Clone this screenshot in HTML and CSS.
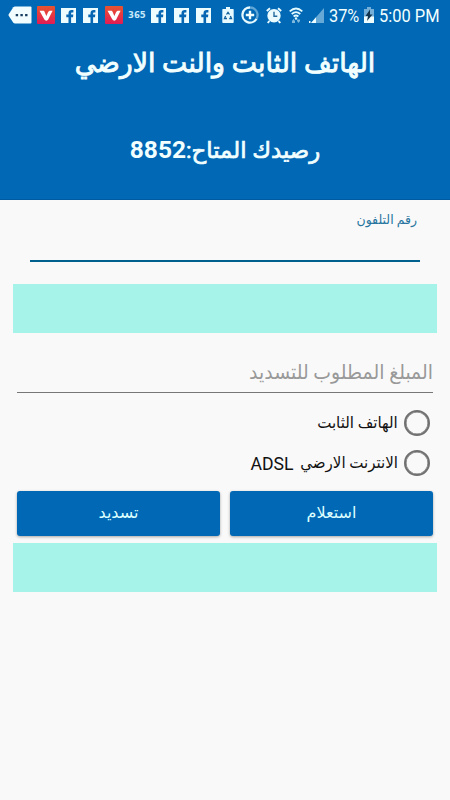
FILE: index.html
```
<!DOCTYPE html>
<html lang="ar" dir="rtl">
  <head>
    <meta charset="UTF-8" />
    <meta name="viewport" content="width=device-width, initial-scale=1.0" />
    <title>الهاتف الثابت والنت الارضي</title>
    <link rel="stylesheet" href="styles.css">
  </head>
  <body>
    <!-- shared icons -->
    <svg class="sprite" width="0" height="0">
      <symbol id="facebook" viewBox="0 0 15 15">
        <rect width="15" height="15" fill="#edfcff" />
        <path d="M7.500 15V9.200H5.300V6.600h2.200V5.200c0-2 1.200-3.200 3.200-3.200h1.700v2.400h-1.200c-.9 0-1.100.4-1.100 1.100v1.100h2.200l-.3 2.600h-1.900V15z" fill="#0767b2" />
      </symbol>
      <symbol id="vid" viewBox="0 0 18 18">
        <defs>
          <linearGradient id="red" x1="0" y1="0" x2="0" y2="1">
            <stop offset="0" stop-color="#e8542f" />
            <stop offset="1" stop-color="#e01c55" />
          </linearGradient>
        </defs>
        <rect width="18" height="18" rx="1" fill="url(#red)" />
        <path d="M2.500 4.700h3.700c.8 0 1 .3 1.300 1l1.900 4.300 1.500-3.500c.6-1.300 1.200-1.800 2.500-1.800h2.200l-4.400 8.900c-.8 1.400-3 1.400-3.800 0z" fill="#fff" />
      </symbol>
    </svg>

    <header class="header">
      <div class="status">
        <svg class="tag" width="24" height="18" viewBox="0 0 24 18">
          <path d="M7 .5h15.500q1 0 1 1v15q0 1-1 1H7q-1 0-1.700-.8L.7 9.800q-.5-.8 0-1.600l4.600-6.900Q6 .5 7 .5z" fill="#f1fdff" />
          <path d="M7.700 8h2.400v2.300H7.700zm4.700 0h2.400v2.300h-2.400zm4.700 0h2.400v2.300h-2.400z" fill="#173f60" />
        </svg>
        <svg class="v1" width="18" height="18"><use href="#vid" /></svg>
        <svg class="f1" width="15" height="15"><use href="#facebook" /></svg>
        <svg class="f2" width="15" height="15"><use href="#facebook" /></svg>
        <svg class="v2" width="18" height="18"><use href="#vid" /></svg>
        <span class="sport">365</span>
        <svg class="f3" width="15" height="15"><use href="#facebook" /></svg>
        <svg class="f4" width="15" height="15"><use href="#facebook" /></svg>
        <svg class="f5" width="15" height="15"><use href="#facebook" /></svg>
        <svg class="saver" width="12" height="16" viewBox="0 0 12 16">
          <path d="M4 0h4v2h3q.7 0 .7.7v12.500q0 .8-.7.8H1q-.7 0-.7-.8V2.700Q.3 2 1 2h3z" fill="#e6faff" />
          <path d="M4.500 7.500 6 5.300l1.500 2.200M8.400 9l1.100 2.500H7.200M5 11.500H2.500L3.600 9" fill="none" stroke="#0e5f9d" stroke-width="1.300" />
        </svg>
        <svg class="data" width="18" height="18" viewBox="0 0 18 18">
          <path d="M9 1.500A7.500 7.500 0 1 0 15.500 12.700" fill="none" stroke="#e6faff" stroke-width="2.300" />
          <path d="M9 1.500a7.500 7.500 0 0 1 6.500 11.200" fill="none" stroke="#5fa5d6" stroke-width="2.300" />
          <path d="M9 4.800v8.400M4.800 9h8.400" stroke="#effdff" stroke-width="2.400" />
        </svg>
        <svg class="alarm" width="16" height="17" viewBox="0 0 16 17">
          <circle cx="8" cy="8.800" r="6.700" fill="#e9fbff" />
          <path d="M.8 4 4 1.300M15.200 4 12 1.300M3.300 14l-1.500 2M12.700 14l1.500 2" stroke="#e9fbff" stroke-width="2" />
          <path d="M8 4.800v4.500h3.300" fill="none" stroke="#236b9f" stroke-width="1.400" />
        </svg>
        <svg class="wifi" width="14" height="17" viewBox="0 0 14 17">
          <path d="M.7 4.300q6.300-5.600 12.600 0M2.700 7q4.300-3.700 8.600 0M4.600 9.500q2.400-2 4.800 0" fill="none" stroke="#e3faff" stroke-width="1.800" />
          <circle cx="7" cy="11.500" r="1.200" fill="#e3faff" />
          <path d="m3 14 1.500-2L6 14v2H3zM8 12.500h3V14l-1.500 2L8 14z" fill="#7fb9dd" />
        </svg>
        <svg class="signal" width="15" height="15" viewBox="0 0 15 15">
          <path d="M15 0v15H2z" fill="#66a9d7" />
          <path d="M7 9.200V15H2zM0 13h1.500v2H0z" fill="#ecfcff" />
        </svg>
        <span class="percent">37%</span>
        <svg class="battery" width="10" height="16" viewBox="0 0 10 16">
          <path d="M3 0h4v2h3v8H0V2h3z" fill="#73afd8" />
          <path d="M0 9.500h10V16H0z" fill="#effdff" />
          <path d="M6 2.500 1.500 9H4l-1 5 5.500-6.500H6z" fill="#12344d" />
        </svg>
        <span class="clock">5:00 PM</span>
      </div>
      <h1 class="title">الهاتف الثابت والنت الارضي</h1>
      <p class="balance">رصيدك المتاح:<span class="number">8852</span></p>
    </header>

    <main class="content">
      <div class="phone">
        <label class="phone-label">رقم التلفون</label>
      </div>
      <div class="band"></div>
      <div class="amount"><span class="hint">المبلغ المطلوب للتسديد</span></div>
      <div class="option">
        <span class="radio"></span>
        <span class="option-text">الهاتف الثابت</span>
      </div>
      <div class="option">
        <span class="radio"></span>
        <span class="option-text">الانترنت الارضي</span>
        <span class="latin">ADSL</span>
      </div>
      <div class="buttons">
        <button class="btn">استعلام</button>
        <button class="btn">تسديد</button>
      </div>
      <div class="band"></div>
    </main>
  </body>
</html>
```
FILE: styles.css
```
* {
  box-sizing: border-box;
}

body {
  margin: 0;
  height: 800px;
  overflow: hidden;
  background-color: #f9f9f9;
  font-family: Roboto, "DejaVu Sans", sans-serif;
}

.sprite {
  display: block;
}

.header {
  height: 200px;
  background-color: #0068b5;
  border-bottom: 1px solid #005a9f;
  color: #f2ffff;
  text-align: center;
}

/* status bar */
.status {
  direction: ltr;
  display: flex;
  align-items: center;
  height: 30px;
  padding-left: 8px;
  white-space: nowrap;
}

.status svg,
.status span {
  flex: none;
}

.v1 { margin-left: 5px; }
.f1 { margin-left: 6px; }
.f2 { margin-left: 7px; }
.v2 { margin-left: 7px; }
.f3 { margin-left: 6px; }
.f4 { margin-left: 8px; }
.f5 { margin-left: 7px; }
.saver { margin-left: 11px; }
.data { margin-left: 7px; }
.alarm { margin-left: 7px; }
.wifi { margin-left: 7px; }
.signal { margin-left: 6px; }

.sport {
  width: 17px;
  margin-left: 5px;
  font-family: "DejaVu Sans", sans-serif;
  font-size: 8.5px;
  font-weight: bold;
  line-height: 10px;
  color: #c5e8fa;
}

.percent {
  width: 31px;
  margin-left: 5px;
  font-size: 19px;
  text-align: left;
  transform: scaleX(0.86);
  transform-origin: left;
}

.battery {
  margin-left: 4px;
}

.clock {
  margin-left: 5px;
  font-size: 19px;
  transform: scaleX(0.865);
  transform-origin: left;
}

/* regular arabic glyphs thickened a little, the bold ones are too wide */
.title {
  margin: 13px 0 0;
  height: 40px;
  font-size: 26.8px;
  font-weight: normal;
  line-height: 40px;
  -webkit-text-stroke: 0.9px;
}

.balance {
  margin: 52px 0 0;
  height: 30px;
  font-size: 22.8px;
  line-height: 30px;
  -webkit-text-stroke: 0.7px;
}

.number {
  font-size: 24.5px;
  font-weight: bold;
  -webkit-text-stroke: 0;
}

/* form */
.content {
  padding: 0 13px;
}

.phone {
  height: 62px;
  margin: 0 17px 22px;
  padding: 8px 3px 0;
  border-bottom: 2px solid #00618f;
}

.phone-label {
  display: block;
  font-size: 13px;
  line-height: 24px;
  color: #27759f;
  transform: scaleX(0.96);
  transform-origin: right;
}

.band {
  height: 49px;
  background-color: #a6f4e9;
}

.amount {
  height: 60px;
  margin: 0 4px 10px;
  padding-top: 24px;
  border-bottom: 1px solid #777;
  font-size: 20px;
  line-height: 30px;
  color: #999;
}

.hint {
  display: inline-block;
  transform: scaleX(0.943);
  transform-origin: right;
}

.option {
  display: flex;
  align-items: center;
  height: 40px;
  padding-right: 7px;
  color: #111;
}

.radio {
  width: 26px;
  height: 26px;
  margin-left: 6px;
  border: 2.5px solid #707070;
  border-radius: 50%;
  box-shadow: inset 0 0 0 0.5px #707070;
}

.option-text {
  margin-bottom: 2px;
  font-size: 16px;
  transform: scaleX(0.94);
  transform-origin: right;
}

.latin {
  font-size: 18px;
  transform: scaleX(0.98);
}

.buttons {
  display: flex;
  gap: 10px;
  padding: 8px 4px 7px;
}

.btn {
  flex: 1;
  height: 45px;
  padding: 0 0 2px;
  border: 0;
  border-radius: 3px;
  background-color: #0068b5;
  box-shadow: 0 1px 3px #0005;
  color: #dff;
  font-family: inherit;
  font-size: 16px;
}
```
